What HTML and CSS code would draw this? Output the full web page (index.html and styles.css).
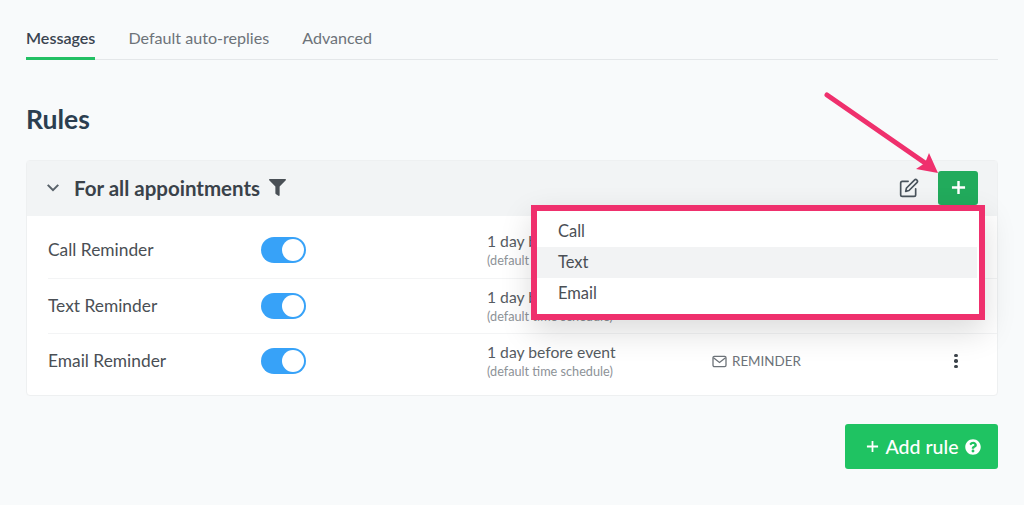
FILE: index.html
```html
<!DOCTYPE html>
<html lang="en">
<head>
    <meta charset="UTF-8">
    <meta name="viewport" content="width=device-width, initial-scale=1.0">
    <title>Rules</title>
    <link rel="stylesheet" href="styles.css">
</head>
<body>
    <div class="page">
        <div class="tabs">
            <a class="tab active">Messages</a>
            <a class="tab">Default auto-replies</a>
            <a class="tab">Advanced</a>
        </div>

        <h1 class="title">Rules</h1>

        <div class="card">
            <div class="card-head">
                <svg class="chevron" viewBox="0 0 16 10"><path d="M2 2l6 6 6-6"/></svg>
                <span class="card-title">For all appointments</span>
                <svg class="filter" viewBox="0 0 512 512"><path d="M487.976 0H24.028C2.71 0-8.047 25.866 7.058 40.971L192 225.941V432c0 7.831 3.821 15.17 10.237 19.662l80 55.98C298.02 518.69 320 507.493 320 487.98V225.941l184.947-184.97C520.021 25.896 509.338 0 487.976 0z"/></svg>
                <svg class="edit" viewBox="0 0 24 24"><path d="M11 4H4a2 2 0 0 0-2 2v14a2 2 0 0 0 2 2h14a2 2 0 0 0 2-2v-7"/><path d="M18.5 2.5a2.121 2.121 0 0 1 3 3L12 15l-4 1 1-4 9.5-9.5z"/></svg>
                <button class="plus-btn"><svg viewBox="0 0 16 16"><path d="M8 1v14M1 8h14"/></svg></button>
            </div>

            <div class="row">
                <span class="name">Call Reminder</span>
                <span class="toggle"></span>
                <div class="when">1 day before event<small>(default time schedule)</small></div>
                <div class="type">REMINDER</div>
                <div class="more"><i></i><i></i><i></i></div>
            </div>
            <div class="row">
                <span class="name">Text Reminder</span>
                <span class="toggle"></span>
                <div class="when">1 day before event<small>(default time schedule)</small></div>
                <div class="type">REMINDER</div>
                <div class="more"><i></i><i></i><i></i></div>
            </div>
            <div class="row">
                <span class="name">Email Reminder</span>
                <span class="toggle"></span>
                <div class="when">1 day before event<small>(default time schedule)</small></div>
                <div class="type">
                    <svg class="mail" viewBox="0 0 16 14"><rect x="1" y="1.5" width="14" height="11" rx="1.5"/><path d="M1.5 3l6.5 5 6.5-5"/></svg>
                    REMINDER
                </div>
                <div class="more"><i></i><i></i><i></i></div>
            </div>

            <div class="dropdown">
                <div class="dropdown-item">Call</div>
                <div class="dropdown-item hover">Text</div>
                <div class="dropdown-item">Email</div>
            </div>
        </div>

        <div class="actions">
            <button class="add-rule">
                <svg class="add-plus" viewBox="0 0 14 14"><path d="M7 1v12M1 7h12"/></svg>
                <span>Add rule</span>
                <svg class="help" viewBox="0 0 512 512"><path d="M504 256c0 136.997-111.043 248-248 248S8 392.997 8 256C8 119.083 119.043 8 256 8s248 111.083 248 248zM262.655 90c-54.497 0-89.255 22.957-116.549 63.758-3.536 5.286-2.353 12.415 2.715 16.258l34.699 26.31c5.205 3.947 12.621 3.008 16.665-2.122 17.864-22.658 30.113-35.797 57.303-35.797 20.429 0 45.698 13.148 45.698 32.958 0 14.976-12.363 22.667-32.534 33.976C247.128 238.528 216 254.941 216 296v4c0 6.627 5.373 12 12 12h56c6.627 0 12-5.373 12-12v-1.333c0-28.462 83.186-29.647 83.186-106.667 0-58.002-60.165-102-116.531-102zM256 338c-25.365 0-46 20.635-46 46 0 25.364 20.635 46 46 46s46-20.636 46-46c0-25.365-20.635-46-46-46z"/></svg>
            </button>
        </div>
    </div>

    <!-- annotation arrow drawn on top of the screenshot -->
    <svg class="arrow" viewBox="0 0 1024 505">
        <path class="arrow-line" d="M827 95L928 165"/>
        <path class="arrow-head" d="M938 173L929 153L925 163L916 169z"/>
    </svg>
</body>
</html>
```

FILE: styles.css
```css
* {
    box-sizing: border-box;
}

html, body {
    height: 100%;
}

body {
    margin: 0;
    overflow: hidden;
    font-family: "Lato", sans-serif;
    background-color: #f8fafb;
    color: #4a4f55;
}

.page {
    padding: 0 26px;
}

.tabs {
    display: flex;
    gap: 33px;
    height: 60px;
    padding-top: 28px;
    border-bottom: 1px solid #e4e7e9;
}

.tab {
    height: 32px;
    font-size: 16.1px;
    line-height: 20px;
    color: #6d7379;
}

.tab.active {
    color: #3a4450;
    font-weight: 600;
    border-bottom: 3px solid #22c064;
}

.title {
    margin: 42px 0 24px;
    font-size: 26.5px;
    line-height: 34px;
    font-weight: 700;
    color: #2b3e50;
}

.card {
    position: relative;
    height: 236px;
    background-color: #fff;
    border: 1px solid #eef0f1;
    border-radius: 4px;
}

.card-head {
    display: flex;
    align-items: center;
    height: 55px;
    padding: 0 19px 2px;
    background-color: #f2f4f5;
}

.chevron {
    width: 14px;
    height: 9px;
    margin-right: 14px;
    fill: none;
    stroke: #59626a;
    stroke-width: 2.4;
}

.card-title {
    font-size: 20.5px;
    font-weight: 700;
    color: #3a424a;
}

.filter {
    width: 17px;
    height: 17px;
    margin-left: 9px;
    fill: #4a5056;
}

.edit {
    width: 20px;
    height: 20px;
    margin-left: auto;
    fill: none;
    stroke: #49535c;
    stroke-width: 2;
    stroke-linecap: round;
    stroke-linejoin: round;
}

.plus-btn {
    display: flex;
    align-items: center;
    justify-content: center;
    width: 40px;
    height: 34px;
    margin-left: 19px;
    border: 0;
    border-radius: 3px;
    background-color: #22ab5c;
}

.plus-btn svg {
    width: 15px;
    height: 15px;
    fill: none;
    stroke: #fff;
    stroke-width: 2.6;
}

.row {
    display: grid;
    grid-template-columns: 213px 226px 225px 1fr 40px;
    align-items: center;
    height: 55px;
    margin-left: 21px;
    padding-right: 21px;
    border-top: 1px solid #f3f4f5;
    font-size: 17.35px;
}

.card-head + .row {
    height: 62px;
    padding-top: 6px;
    border-top: 0;
}

.row:last-of-type {
    height: 62px;
    padding-bottom: 7px;
}

.name {
    margin-top: -2px;
}

.toggle {
    position: relative;
    display: block;
    width: 45px;
    height: 26px;
    border-radius: 13px;
    background-color: #37a2f8;
}

.toggle::after {
    content: "";
    position: absolute;
    top: 2px;
    right: 2px;
    width: 22px;
    height: 22px;
    border-radius: 50%;
    background-color: #fff;
}

.when {
    font-size: 15.7px;
    line-height: 19px;
    color: #565c62;
}

.when small {
    display: block;
    font-size: 12.7px;
    line-height: 18px;
    color: #8d9297;
}

.type {
    display: flex;
    align-items: center;
    gap: 5px;
    font-size: 13.4px;
    color: #6d7379;
}

.mail {
    width: 15px;
    height: 13px;
    fill: none;
    stroke: #6d7379;
    stroke-width: 1.4;
}

.more {
    display: flex;
    flex-direction: column;
    align-items: center;
    gap: 2px;
}

.more i {
    width: 3.5px;
    height: 3.5px;
    border-radius: 50%;
    background-color: #3c434a;
}

.dropdown {
    position: absolute;
    top: 44px;
    left: 504px;
    width: 454px;
    height: 115px;
    padding: 5px 2px 0 0;
    border: 6px solid #ef306d;
    background-color: #fff;
    box-shadow: 0 12px 30px rgba(0, 0, 0, 0.14);
    font-size: 16.5px;
    color: #4a4f55;
}

.dropdown-item {
    height: 31px;
    padding-left: 21px;
    line-height: 31px;
}

.dropdown-item.hover {
    background-color: #f2f3f4;
}

.actions {
    display: flex;
    justify-content: flex-end;
    margin-top: 28px;
}

.add-rule {
    display: flex;
    align-items: center;
    justify-content: center;
    gap: 7px;
    width: 153px;
    height: 45px;
    padding: 0 0 0 4px;
    border: 0;
    border-radius: 3px;
    background-color: #1fc362;
    color: #fff;
    font-family: inherit;
    font-size: 19.5px;
    font-weight: 500;
}

.add-plus {
    width: 13px;
    height: 13px;
    fill: none;
    stroke: #fff;
    stroke-width: 1.9;
}

.help {
    width: 16px;
    height: 16px;
    fill: #fff;
}

.arrow {
    position: absolute;
    top: 0;
    left: 0;
    width: 1024px;
    height: 505px;
    pointer-events: none;
}

.arrow-line {
    fill: none;
    stroke: #ef306d;
    stroke-width: 5;
    stroke-linecap: round;
}

.arrow-head {
    fill: #ef306d;
}
```
